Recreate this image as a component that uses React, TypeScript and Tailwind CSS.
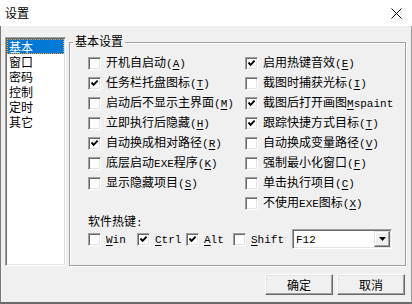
import type { ReactNode } from "react";

// '&' marks the mnemonic letter that gets underlined
function Label({ t }: { t: string }) {
  const runs: { ascii: boolean; chars: { c: string; u: boolean }[] }[] = [];
  let u = false;
  for (const c of t) {
    if (c === "&") {
      u = true;
      continue;
    }
    const ascii = c.charCodeAt(0) < 128;
    const last = runs[runs.length - 1];
    if (last && last.ascii === ascii) last.chars.push({ c, u });
    else runs.push({ ascii, chars: [{ c, u }] });
    u = false;
  }
  return (
    <span className="whitespace-nowrap">
      {runs.map((r, i) =>
        r.ascii ? (
          <span key={i} className="font-['Liberation_Mono',monospace] text-[11px]">
            {r.chars.map((ch, j) =>
              ch.u ? (
                <span key={j} className="underline underline-offset-2">
                  {ch.c}
                </span>
              ) : (
                ch.c
              )
            )}
          </span>
        ) : (
          <span key={i}>{r.chars.map((ch) => ch.c).join("")}</span>
        )
      )}
    </span>
  );
}

function Box({ on }: { on?: boolean }) {
  return (
    <span className="w-[13px] h-[13px] shrink-0 bg-white border border-t-[#a0a0a0] border-l-[#a0a0a0] border-b-white border-r-white shadow-[inset_1px_1px_0_#696969,inset_-1px_-1px_0_#e3e3e3] flex items-center justify-center">
      {on && (
        <svg width="9" height="9" viewBox="0 0 9 9">
          <path d="M1.5 3.5 L3.6 5.8 L7.6 1.6" fill="none" stroke="#000" strokeWidth="1.9" />
        </svg>
      )}
    </span>
  );
}

function Check({ on, t }: { on?: boolean; t: string }) {
  return (
    <div className="h-[20px] flex items-center">
      <Box on={on} />
      <span className="ml-[5px]">
        <Label t={t} />
      </span>
    </div>
  );
}

function Button({ children }: { children: ReactNode }) {
  return (
    <button className="w-[68px] h-[21px] bg-[#f0f0f0] border border-t-white border-l-white border-b-[#696969] border-r-[#696969] shadow-[inset_-1px_-1px_0_#a0a0a0,inset_1px_1px_0_#e3e3e3] flex items-center justify-center">
      {children}
    </button>
  );
}

const pages = ["基本", "窗口", "密码", "控制", "定时", "其它"];

const left: [boolean, string][] = [
  [false, "开机自启动(&A)"],
  [true, "任务栏托盘图标(&T)"],
  [false, "启动后不显示主界面(&M)"],
  [false, "立即执行后隐藏(&H)"],
  [true, "自动换成相对路径(&R)"],
  [false, "底层启动EXE程序(&K)"],
  [false, "显示隐藏项目(&S)"],
];

const right: [boolean, string][] = [
  [true, "启用热键音效(&E)"],
  [false, "截图时捕获光标(&I)"],
  [true, "截图后打开画图&Mspaint"],
  [true, "跟踪快捷方式目标(&T)"],
  [false, "自动换成变量路径(&V)"],
  [false, "强制最小化窗口(&F)"],
  [false, "单击执行项目(&C)"],
  [false, "不使用EXE图标(&X)"],
];

export default function App() {
  return (
    <div className="w-[412px] h-[304px] flex flex-col bg-[#f0f0f0] text-black text-[12px] leading-[14px] font-['Noto_Sans_CJK_SC',sans-serif] overflow-hidden">
      <div className="h-[26px] shrink-0 bg-white flex items-center justify-between pl-[5px] pr-[10px]">
        <span>设置</span>
        <svg width="11" height="11" viewBox="0 0 11 11">
          <path d="M0.5 0.5 L10.5 10.5 M10.5 0.5 L0.5 10.5" stroke="#000" strokeWidth="1" />
        </svg>
      </div>

      <div className="flex-1 flex flex-col border-l border-r border-b-2 border-l-[#7a7a7a] border-r-[#9a9a9a] border-b-[#6a6a6a]">
        <div className="flex items-start">
          <div className="ml-[4px] mt-[11px] w-[61px] h-[229px] bg-white border border-t-[#a0a0a0] border-l-[#a0a0a0] border-b-white border-r-white shadow-[inset_1px_1px_0_#696969,inset_-1px_-1px_0_#e3e3e3] p-[1px] flex flex-col">
            {pages.map((p, i) =>
              i === 0 ? (
                <div key={p} className="h-[15px] leading-[13px] overflow-hidden bg-[#0078d7] text-white pl-[1px] border border-dotted border-[#ff9f2e] flex items-center">
                  {p}
                </div>
              ) : (
                <div key={p} className="h-[15px] leading-[15px] overflow-hidden pl-[2px] flex items-center">
                  {p}
                </div>
              )
            )}
          </div>

          <div className="relative ml-[3px] mt-[16px] w-[337px] h-[224px] border border-[#a0a0a0] shadow-[inset_1px_1px_0_#fff,1px_1px_0_#fff] pl-[18px] pt-[10px]">
            <span className="absolute left-[3px] top-[-9px] px-[2px] bg-[#f0f0f0]">基本设置</span>
            <div className="flex">
              <div className="w-[157px] flex flex-col">
                {left.map(([on, t]) => (
                  <Check key={t} on={on} t={t} />
                ))}
              </div>
              <div className="flex flex-col">
                {right.map(([on, t]) => (
                  <Check key={t} on={on} t={t} />
                ))}
              </div>
            </div>
            <div className="mt-[2px] h-[14px] flex items-center">
              <Label t="软件热键:" />
            </div>
            <div className="h-[20px] flex items-center">
              <div className="w-[49px]">
                <Check t="&Win" />
              </div>
              <div className="w-[49px]">
                <Check on t="&Ctrl" />
              </div>
              <div className="w-[47px]">
                <Check on t="&Alt" />
              </div>
              <div className="w-[59px]">
                <Check t="&Shift" />
              </div>
              <div className="w-[100px] h-[20px] bg-white border border-t-[#a0a0a0] border-l-[#a0a0a0] border-b-white border-r-white shadow-[inset_1px_1px_0_#696969,inset_-1px_-1px_0_#e3e3e3] p-[1px] flex items-center">
                <span className="flex-1 pl-[2px]">
                  <Label t="F12" />
                </span>
                <span className="w-[16px] h-[16px] bg-[#f0f0f0] border border-t-[#e3e3e3] border-l-[#e3e3e3] border-b-[#696969] border-r-[#696969] shadow-[inset_-1px_-1px_0_#a0a0a0,inset_1px_1px_0_#fff] flex items-center justify-center">
                  <svg width="7" height="4" viewBox="0 0 7 4">
                    <path d="M0 0 H7 L3.5 4 Z" fill="#000" />
                  </svg>
                </span>
              </div>
            </div>
          </div>
        </div>

        <div className="mt-[8px] pr-[6px] flex justify-end gap-[4px]">
          <Button>确定</Button>
          <Button>取消</Button>
        </div>
      </div>
    </div>
  );
}
